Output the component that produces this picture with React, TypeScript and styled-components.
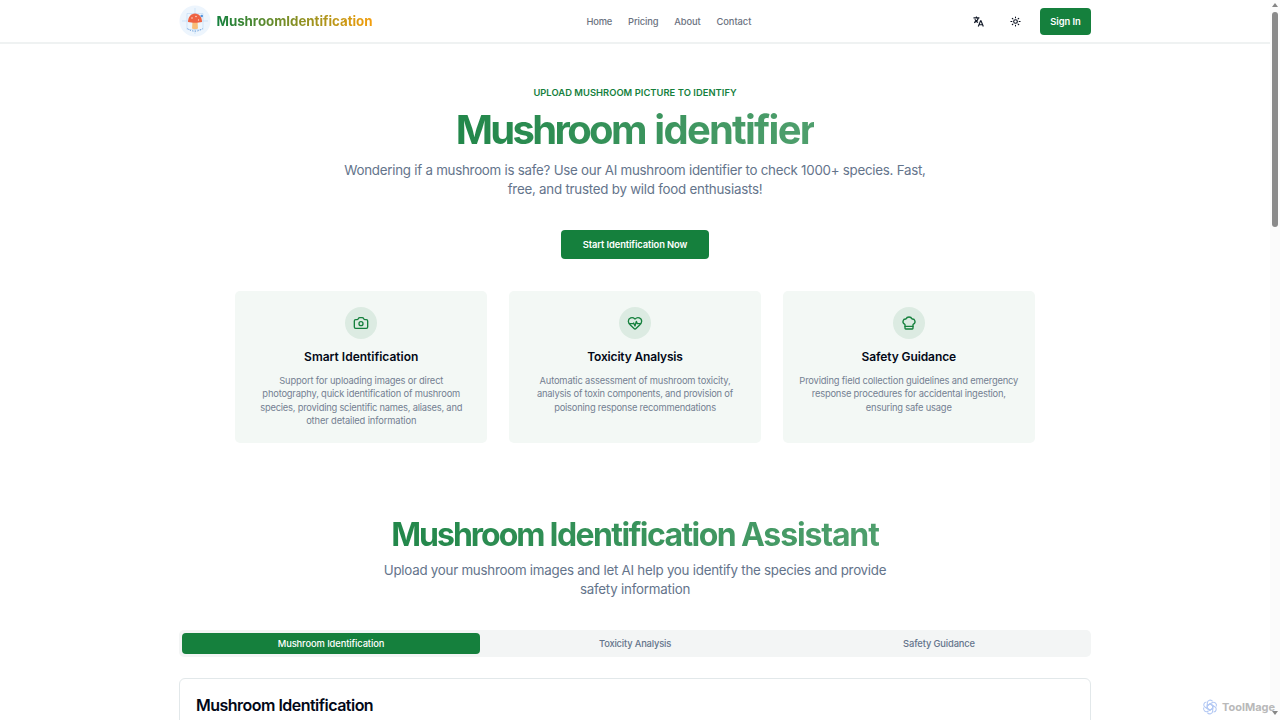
import React from "react";
import styled, { createGlobalStyle } from "styled-components";
import { Camera, ChefHat, HeartPulse, Sun } from "lucide-react";

const GlobalStyle = createGlobalStyle`
  * { box-sizing: border-box; }
  html, body { margin: 0; height: 720px; overflow: hidden; background: #fff; }
  body { font-family: Inter, "Liberation Sans", sans-serif; color: #020817; }
  h1, h2, h3, p { margin: 0; }
  button { font-family: inherit; border: 0; padding: 0; }
`;

const Page = styled.div`
  display: flex;
  width: 1280px;
  height: 720px;
  overflow: hidden;
`;

const Content = styled.div`
  width: 1270px;
  display: flex;
  flex-direction: column;
`;

const Header = styled.header`
  height: 44px;
  flex: none;
  border-bottom: 2px solid #eff2f2;
  display: flex;
  justify-content: center;
`;

const HeaderInner = styled.div`
  width: 912px;
  display: grid;
  grid-template-columns: 407.5px auto 1fr;
  align-items: center;
`;

const Brand = styled.div`
  display: flex;
  align-items: center;
  gap: 5.5px;
`;

const BrandName = styled.span`
  font-size: 13.33px;
  font-weight: 700;
  white-space: nowrap;
  background: linear-gradient(90deg, #15803d, #f59e0b);
  background-clip: text;
  color: transparent;
`;

const Tracked = styled.span<{ $track?: number }>`
  letter-spacing: ${(p) => p.$track ?? 0}px;
  white-space: nowrap;
`;

const Nav = styled.nav`
  display: flex;
  gap: 16px;
  font-size: 9.33px;
  font-weight: 500;
  color: #6b7280;
`;

const Actions = styled.div`
  display: flex;
  align-items: center;
  justify-content: flex-end;
`;

const IconSlot = styled.span<{ $gap: number }>`
  display: flex;
  margin-right: ${(p) => p.$gap}px;
`;

const SignIn = styled.button`
  width: 51px;
  height: 27px;
  border-radius: 4px;
  background: #15803d;
  color: #fff;
  font-size: 9.33px;
  font-weight: 600;
`;

const Hero = styled.section`
  display: flex;
  flex-direction: column;
  align-items: center;
  text-align: center;
  padding-top: 41.5px;
`;

const Eyebrow = styled.p`
  font-size: 9.33px;
  line-height: 13.33px;
  font-weight: 600;
  color: #15803d;
`;

const Title = styled.h1<{ $size: number; $top: number; $bottom: number }>`
  margin: ${(p) => p.$top}px 0 ${(p) => p.$bottom}px;
  font-size: ${(p) => p.$size}px;
  line-height: 50px;
  font-weight: 700;
  background: linear-gradient(90deg, #22874a, #4f9f6d);
  background-clip: text;
  color: transparent;
`;

const Lead = styled.p`
  font-size: 13.33px;
  line-height: 18.67px;
  color: #64748b;
`;

const CallToAction = styled.button`
  width: 148px;
  height: 29.5px;
  margin-top: 31.3px;
  border-radius: 4px;
  background: #15803d;
  color: #fff;
  font-size: 9.33px;
  font-weight: 600;
`;

const CardGrid = styled.div`
  width: 800px;
  margin-top: 32px;
  display: grid;
  grid-template-columns: repeat(3, 1fr);
  gap: 21.33px;
`;

const Card = styled.article`
  height: 152px;
  padding-top: 16px;
  border-radius: 5px;
  background: #f3f8f5;
  display: flex;
  flex-direction: column;
  align-items: center;
`;

const IconDisc = styled.div`
  width: 32px;
  height: 32px;
  border-radius: 50%;
  background: #dcebe2;
  color: #15803d;
  display: flex;
  align-items: center;
  justify-content: center;
`;

const CardTitle = styled.h3`
  margin-top: 9px;
  font-size: 12px;
  line-height: 18.67px;
  font-weight: 600;
`;

const CardText = styled.p`
  margin-top: 7.3px;
  font-size: 9.33px;
  line-height: 13.33px;
  color: #738092;
`;

const Assistant = styled.section`
  margin-top: 66px;
  display: flex;
  flex-direction: column;
  align-items: center;
  text-align: center;
`;

const TabList = styled.div`
  width: 912px;
  height: 27px;
  margin-top: 31.7px;
  padding: 2.67px;
  border-radius: 5px;
  background: #f3f5f5;
  display: grid;
  grid-template-columns: repeat(3, 1fr);
  gap: 5.33px;
`;

const Tab = styled.button<{ $active?: boolean }>`
  border-radius: 4px;
  background: ${(p) => (p.$active ? "#15803d" : "transparent")};
  color: ${(p) => (p.$active ? "#fff" : "#64748b")};
  font-size: 9.33px;
  font-weight: 500;
`;

const Panel = styled.div`
  width: 912px;
  height: 80px;
  margin-top: 21px;
  padding: 16px;
  border: 1px solid #e2e8ea;
  border-radius: 6px;
  text-align: left;
`;

const PanelTitle = styled.h3`
  font-size: 16px;
  line-height: 21px;
  font-weight: 600;
`;

const Scrollbar = styled.aside`
  width: 10px;
  background: #fbfbfb;
  display: flex;
  flex-direction: column;
  align-items: center;
  padding: 3px 0 5px;
`;

const Thumb = styled.div`
  width: 6px;
  height: 215px;
  margin-top: 5px;
  border-radius: 3px;
  background: #8b8b8b;
`;

const Arrow = styled.span<{ $down?: boolean }>`
  border: 3px solid transparent;
  border-top: ${(p) => (p.$down ? "4px solid #858585" : "0")};
  border-bottom: ${(p) => (p.$down ? "0" : "4px solid #858585")};
  margin-top: ${(p) => (p.$down ? "auto" : "0")};
`;

const Watermark = styled.div`
  position: absolute;
  left: 1202px;
  top: 699px;
  display: flex;
  align-items: center;
  gap: 4px;
  font: 700 11px/16px Inter, sans-serif;
  color: #b9b9b9;
`;

function Logo() {
  return (
    <svg width="32" height="32" viewBox="0 0 32 32" fill="none">
      <circle cx="16" cy="16" r="15.5" fill="#edf5fd" />
      <path d="M8 8.5h16v16H8zM16 3v5M3 16h7M22 16h7M16 24v5" stroke="#bdd8f7" strokeWidth=".6" />
      <path d="M13.500 16h5l.5 7.500c-1.800 1-4.200 1-6 0z" fill="#f8bd78" />
      <path d="M9 17c0-5 3-8.500 7-8.500s7 3.500 7 8.500c-4 1-10 1-14 0z" fill="#ee6243" />
      <circle cx="13" cy="13" r=".8" fill="#fbd9c8" />
      <circle cx="17" cy="11.5" r=".8" fill="#fbd9c8" />
      <circle cx="19.500" cy="15" r=".7" fill="#fbd9c8" />
      <circle cx="22.700" cy="11" r="1.300" fill="#5796de" />
      <path d="M8.500 23.500c4 3.500 11 3.500 15 0" stroke="#6a9edb" strokeDasharray="1.4 1.2" />
    </svg>
  );
}

function TranslateIcon() {
  return (
    <svg width="11" height="11" viewBox="0 0 24 24" fill="none" stroke="#111827" strokeWidth="2.5">
      <path d="M1 4h13M7.500 1v3M2.500 14.500c5-2 8-5 9-10M4 7c2 4 4 5.500 7 7" />
      <path d="M11.500 23l5-12.500h1l5 12.500M13.500 19h7" />
    </svg>
  );
}

function Knot() {
  return (
    <svg width="16" height="16" viewBox="0 0 16 16" fill="none" stroke="#b4c9f4" strokeWidth="1.100">
      {[0, 60, 120, 180, 240, 300].map((a) => (
        <path
          key={a}
          transform={`rotate(${a} 8 8)`}
          d="M5.300 9.500V4a2.900 2.900 0 0 1 5.300-1.600M5.300 6.400L8 4.900l3.300 1.900"
        />
      ))}
    </svg>
  );
}

type Line = [string, number];

function Lines({ lines }: { lines: Line[] }) {
  return (
    <>
      {lines.map(([text, track], i) => (
        <React.Fragment key={text}>
          {i > 0 && <br />}
          <Tracked $track={track}>{text}</Tracked>
        </React.Fragment>
      ))}
    </>
  );
}

const cards: { icon: typeof Camera; title: Line; lines: Line[] }[] = [
  {
    icon: Camera,
    title: ["Smart Identification", 0],
    lines: [
      ["Support for uploading images or direct", -0.165],
      ["photography, quick identification of mushroom", -0.18],
      ["species, providing scientific names, aliases, and", -0.21],
      ["other detailed information", -0.13],
    ],
  },
  {
    icon: HeartPulse,
    title: ["Toxicity Analysis", -0.16],
    lines: [
      ["Automatic assessment of mushroom toxicity,", -0.155],
      ["analysis of toxin components, and provision of", -0.19],
      ["poisoning response recommendations", -0.2],
    ],
  },
  {
    icon: ChefHat,
    title: ["Safety Guidance", -0.1],
    lines: [
      ["Providing field collection guidelines and emergency", -0.165],
      ["response procedures for accidental ingestion,", -0.185],
      ["ensuring safe usage", -0.19],
    ],
  },
];

export default function App() {
  return (
    <>
      <GlobalStyle />
      <Page>
        <Content>
          <Header>
            <HeaderInner>
              <Brand>
                <Logo />
                <BrandName><Tracked $track={-0.03}>MushroomIdentification</Tracked></BrandName>
              </Brand>
              <Nav>
                <Tracked $track={-0.2}>Home</Tracked>
                <Tracked $track={-0.13}>Pricing</Tracked>
                <Tracked $track={-0.13}>About</Tracked>
                <Tracked $track={-0.05}>Contact</Tracked>
              </Nav>
              <Actions>
                <IconSlot $gap={26.5}><TranslateIcon /></IconSlot>
                <IconSlot $gap={19}><Sun size={11} strokeWidth={2.3} /></IconSlot>
                <SignIn><Tracked>Sign In</Tracked></SignIn>
              </Actions>
            </HeaderInner>
          </Header>
          <Hero>
            <Eyebrow><Tracked $track={0.055}>UPLOAD MUSHROOM PICTURE TO IDENTIFY</Tracked></Eyebrow>
            <Title $size={40} $top={6.5} $bottom={5.7}>
              <Tracked $track={-2.65}>Mushroom</Tracked>{" "}
              <Tracked $track={-1.75}>identifier</Tracked>
            </Title>
            <Lead>
              <Lines lines={[
                ["Wondering if a mushroom is safe? Use our AI mushroom identifier to check 1000+ species. Fast,", -0.253],
                ["free, and trusted by wild food enthusiasts!", -0.235],
              ]} />
            </Lead>
            <CallToAction><Tracked $track={-0.08}>Start Identification Now</Tracked></CallToAction>
            <CardGrid>
              {cards.map(({ icon: Icon, title, lines }) => (
                <Card key={title[0]}>
                  <IconDisc><Icon size={16} /></IconDisc>
                  <CardTitle><Tracked $track={title[1]}>{title[0]}</Tracked></CardTitle>
                  <CardText><Lines lines={lines} /></CardText>
                </Card>
              ))}
            </CardGrid>
          </Hero>
          <Assistant>
            <Title as="h2" $size={32} $top={0.5} $bottom={1.3}>
              <Tracked $track={-2}>Mushroom</Tracked>
              <Tracked $track={-1.6}> Identification </Tracked>
              <Tracked $track={-1.15}>Assistant</Tracked>
            </Title>
            <Lead>
              <Lines lines={[
                ["Upload your mushroom images and let AI help you identify the species and provide", -0.25],
                ["safety information", -0.22],
              ]} />
            </Lead>
            <TabList>
              <Tab $active><Tracked $track={-0.09}>Mushroom Identification</Tracked></Tab>
              <Tab><Tracked $track={-0.17}>Toxicity Analysis</Tracked></Tab>
              <Tab><Tracked $track={-0.13}>Safety Guidance</Tracked></Tab>
            </TabList>
            <Panel><PanelTitle><Tracked $track={-0.52}>Mushroom Identification</Tracked></PanelTitle></Panel>
          </Assistant>
        </Content>
        <Scrollbar>
          <Arrow />
          <Thumb />
          <Arrow $down />
        </Scrollbar>
        <Watermark><Knot />ToolMage</Watermark>
      </Page>
    </>
  );
}
